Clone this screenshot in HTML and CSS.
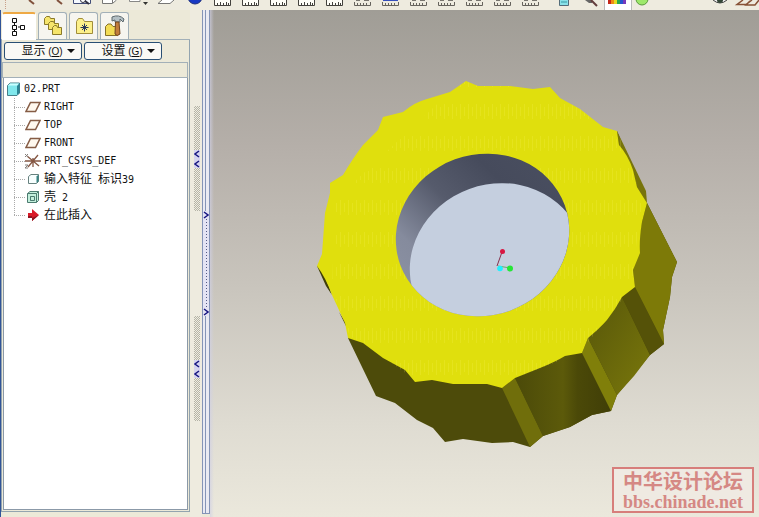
FILE: index.html
```
<!DOCTYPE html>
<html lang="zh-CN">
<head>
<meta charset="utf-8">
<title>02.PRT</title>
<link rel="stylesheet" href="styles.css">
</head>
<body>
<svg class="defs" aria-hidden="true">
  <defs>
    <symbol id="ruler" viewBox="0 0 28 10"><path d="M6.500 0V5.500H22.500V0" fill="#fffef8" stroke="#44423e"/><path d="M9.500 5V3M12.500 5V2M15.500 5V3M18.500 5V2M20.500 5V3" stroke="#44423e"/></symbol>
    <symbol id="ruler-faint" viewBox="0 0 28 10"><path d="M6.500 2V5.500H22.500V2M9.500 5V3M12.500 5V3M15.500 5V3M18.500 5V3" fill="none" stroke="#66635d"/><path d="M8 .5H12M16 .5H21" stroke="#77746e"/></symbol>
    <symbol id="plane" viewBox="0 0 16 16"><path d="M5.500 3.500H15L10.500 12.500H1Z" fill="#fff8ee" stroke="#855c45" stroke-width="1.500"/></symbol>
  </defs>
</svg>

<header class="toolbar">
  <button class="tool" aria-label="Brush"><svg viewBox="0 0 28 10"><path d="M17 0L22 4" stroke="#80503c" stroke-width="2"/><path d="M-6.500 0V9" stroke="#c9a08a" stroke-dasharray="1 1"/></svg></button>
  <button class="tool" aria-label="Pen"><svg viewBox="0 0 28 10"><path d="M17 0L22 4" stroke="#80503c" stroke-width="2"/></svg></button>
  <button class="tool" aria-label="Find"><svg viewBox="0 0 28 10"><path d="M5.500 0V3.500H22.500V0" fill="#f4f8ff" stroke="#424d79"/><circle cx="15" cy="0" r="2.500" fill="#fff" stroke="#334"/><path d="M17 1L21 4" stroke="#334" stroke-width="2"/></svg></button>
  <button class="tool" aria-label="Model"><svg viewBox="0 0 28 10"><path d="M6.500 0V3.500H16.500L20.500 0M16.500 3V0" fill="#fff" stroke="#777"/></svg></button>
  <button class="tool" aria-label="Sheets"><svg viewBox="0 0 28 10"><path d="M5.500 0V1.500H16V0" fill="#fff" stroke="#888"/><path d="M19 2H24L21.500 5Z" fill="#333"/></svg></button>
  <button class="tool" aria-label="Plane"><svg viewBox="0 0 28 10"><path d="M10 0L6 3.500H18L22 0" fill="#fff" stroke="#777"/></svg></button>
  <button class="tool" aria-label="Shade"><svg viewBox="0 0 28 10"><circle cx="15" cy="-3" r="7" fill="#1738c4" stroke="#20307c"/></svg></button>
  <button class="tool" aria-label="View 1"><svg><use href="#ruler"/></svg></button>
  <button class="tool" aria-label="View 2"><svg><use href="#ruler"/></svg></button>
  <button class="tool" aria-label="View 3"><svg><use href="#ruler"/></svg></button>
  <button class="tool" aria-label="View 4"><svg><use href="#ruler"/></svg></button>
  <button class="tool" aria-label="View 5"><svg><use href="#ruler"/></svg></button>
  <button class="tool" aria-label="View 6"><svg><use href="#ruler-faint"/></svg></button>
  <button class="tool" aria-label="View 7"><svg viewBox="0 0 28 10"><use href="#ruler-faint" width="28" height="10"/><path d="M7 .5H22" stroke="#354fbb"/></svg></button>
  <button class="tool" aria-label="View 8"><svg><use href="#ruler-faint"/></svg></button>
  <button class="tool" aria-label="View 9"><svg><use href="#ruler-faint"/></svg></button>
  <button class="tool" aria-label="View 10"><svg><use href="#ruler-faint"/></svg></button>
  <button class="tool" aria-label="View 11"><svg><use href="#ruler-faint"/></svg></button>
  <button class="tool" aria-label="View 12"><svg><use href="#ruler-faint"/></svg></button>
  <button class="tool spaced" aria-label="Delete"><svg viewBox="0 0 28 10"><path d="M9.500 0V5.500H18.500V0" fill="#88e1e8" stroke="#536c79"/><path d="M11 2H17" stroke="#379aa6"/></svg></button>
  <button class="tool" aria-label="Inspect"><svg viewBox="0 0 28 10"><path d="M7 0L11 3H14V0Z" fill="#666"/><path d="M13 0L19 6" stroke="#633d3d" stroke-width="2"/></svg></button>
  <button class="tool pressed" aria-label="Colors"><svg viewBox="0 0 28 10"><path d="M3 0h3v4h-3z" fill="#c5281a"/><path d="M6 0h3v4h-3z" fill="#f08b12"/><path d="M9 0h3v4h-3z" fill="#e5db20"/><path d="M12 0h3v4h-3z" fill="#29a74b"/><path d="M15 0h3v4h-3z" fill="#2657cf"/><path d="M18 0h3v4h-3z" fill="#7539bd"/></svg></button>
  <button class="tool" aria-label="Regenerate"><svg viewBox="0 0 28 10"><circle cx="12" cy="-1" r="6" fill="#9de86a" stroke="#5a993e"/></svg></button>
  <button class="tool last" aria-label="Visibility"><svg viewBox="0 0 28 10"><path d="M10 0Q17 6 24 0" fill="#eee" stroke="#444"/><circle cx="17" cy="0" r="3" fill="#354637"/></svg></button>
  <button class="tool" aria-label="Datum planes"><svg viewBox="0 0 28 10"><path d="M12 0L6 4.500H15L21 0M19 1L15 5H24L28 0" fill="none" stroke="#875136" stroke-width="1.500"/></svg></button>
</header>

<main class="workspace">
  <aside class="navigator">
    <nav class="tabs">
      <button class="tab active" aria-label="Model tree"><svg width="16" height="20" viewBox="0 0 16 20"><path d="M3.500 6V8M3.500 12V14M7 10H9" stroke="#111"/><path d="M1.500 1.500h4v4h-4zM1.500 8.500h4v4h-4zM9.500 8.500h4v4h-4zM1.500 14.500h4v4h-4z" fill="#fff" stroke="#111"/></svg></button>
      <button class="tab" aria-label="Folders"><svg width="20" height="20" viewBox="0 0 20 20"><g fill="#f6e56c" stroke="#8b7a29"><path d="M1.500 8.500V2.500L3.500 .5H6.500L7.500 2.500H11.500V8.500Z"/><path d="M5.500 13.500V7.500L7.500 5.500H10.500L11.500 7.500H15.500V13.500Z"/><path d="M9.500 18.500V11.500L11.500 9.500H13.500L14.500 11.500H18.500V18.500Z"/></g></svg></button>
      <button class="tab" aria-label="Favorites"><svg width="20" height="20" viewBox="0 0 20 20"><path d="M2.500 17.500V5.500L4.500 2.500H8.500L10.500 5.500H18.500V17.500Z" fill="#fcf08a" stroke="#a18d3a"/><path d="M10.500 7.500V15.500M6.500 11.500H14.500M8 9L13 14M13 9L8 14" stroke="#26365c"/></svg></button>
      <button class="tab" aria-label="Tools"><svg width="22" height="22" viewBox="0 0 22 22"><path d="M1.500 20.500V11.500L4 9H7L9 11.500H13.500V20.500Z" fill="#f2dc55" stroke="#857129"/><path d="M8 2Q15 -1 20 4L19 7L16 4V7H11V5L8 6Z" fill="#b4c0c5" stroke="#5c686d"/><path d="M11.500 7H15L16 19Q13 22 11 19Z" fill="#c17c3a" stroke="#71451f"/></svg></button>
    </nav>
    <section class="panel">
      <div class="menus">
        <button class="menu"><span>显示<span class="key"> (<u>O</u>)</span></span><i class="arrow"></i></button>
        <button class="menu"><span>设置<span class="key"> (<u>G</u>)</span></span><i class="arrow"></i></button>
      </div>
      <div class="tree-head"></div>
      <div class="tree">
        <div class="root"><svg class="icon" viewBox="0 0 16 16"><path d="M1.500 4.500L4 2H13.500V12L11 14.500H1.500Z" fill="#80e7ec" stroke="#477f89"/><path d="M11 14V5L13.500 2V12Z" fill="#2b8494"/><path d="M2 4.500H11L13 2.500H4Z" fill="#c9ffff"/></svg><span class="latin">02.PRT</span></div>
        <ul class="nodes">
          <li><svg class="icon"><use href="#plane"/></svg><span class="latin">RIGHT</span></li>
          <li><svg class="icon"><use href="#plane"/></svg><span class="latin">TOP</span></li>
          <li><svg class="icon"><use href="#plane"/></svg><span class="latin">FRONT</span></li>
          <li><svg class="icon" viewBox="0 0 16 16"><path d="M2 3L14 13M13 2L3 14M0 8H16M8 5V14" stroke="#855743" stroke-width="1.300"/><path d="M0 1L3 4M3 1L0 4M0 12H3L0 15H3" stroke="#85807c" fill="none"/></svg><span class="latin">PRT_CSYS_DEF</span></li>
          <li><svg class="icon" viewBox="0 0 16 16"><path d="M3.500 5.500L6 3.500H13.500V10.500L11.500 12.500H3.500Z" fill="#f8ffff" stroke="#66817e"/><path d="M11.500 12V5.500L13.500 3.500V10.500Z" fill="#398383"/></svg><span>输入特征<span class="latin"> </span>标识<span class="latin">39</span></span></li>
          <li><svg class="icon" viewBox="0 0 16 16"><path d="M2.500 4.500L5 2.500H13.500V11.500L11.500 13.500H2.500Z" fill="#c3efdc" stroke="#4c7b70"/><path d="M2.500 4.500H11.500V13.500M11.500 4.500L13.500 2.500M5.500 7.500H9.500V11.500H5.500ZM5.500 7.500V11.500" fill="none" stroke="#4c7b70"/></svg><span>壳<span class="latin"> 2</span></span></li>
          <li><svg class="icon" viewBox="0 0 16 16"><path d="M3 6H7V2L14 8L7 14V10H3Z" fill="#d91a28"/><path d="M3 9H7V14L14 8L7 11H3Z" fill="#8e1420"/></svg><span>在此插入</span></li>
        </ul>
      </div>
    </section>
  </aside>

  <div class="grips">
    <button class="grip" aria-label="Collapse"><svg width="6" height="18" viewBox="0 0 6 18"><path d="M0 0H6V18H0Z" fill="#d5d2ee"/><path d="M5 1L1 4L5 7M5 11L1 14L5 17" fill="none" stroke="#171681" stroke-width="1.500"/></svg></button>
    <button class="grip" aria-label="Collapse tree"><svg width="6" height="18" viewBox="0 0 6 18"><path d="M0 0H6V18H0Z" fill="#d5d2ee"/><path d="M5 1L1 4L5 7M5 11L1 14L5 17" fill="none" stroke="#171681" stroke-width="1.500"/></svg></button>
  </div>
  <div class="rail">
    <button class="expand" aria-label="Expand"><svg width="6" height="8" viewBox="0 0 6 8"><path d="M1 1L5 4L1 7" fill="none" stroke="#171681" stroke-width="1.500"/></svg><i class="dots"></i><svg width="6" height="8" viewBox="0 0 6 8"><path d="M1 1L5 4L1 7" fill="none" stroke="#171681" stroke-width="1.500"/></svg></button>
  </div>

  <section class="view">
    <svg class="model" viewBox="210 10 549 507" preserveAspectRatio="xMidYMid meet" role="img" aria-label="02.PRT">
      <defs>
        <linearGradient id="wall" x1="0" x2="1" y1="1" y2="0"><stop offset="0" stop-color="#9197a8"/><stop offset=".28" stop-color="#858b9d"/><stop offset=".5" stop-color="#565b6c"/><stop offset=".7" stop-color="#464b5c"/><stop offset="1" stop-color="#4b5062"/></linearGradient>
        <linearGradient id="rim" x1="0" x2="1" y1="0" y2="1"><stop offset="0" stop-color="#57560a"/><stop offset="1" stop-color="#7a780b"/></linearGradient>
        <linearGradient id="notch" x1="0" x2="1"><stop offset="0" stop-color="#4b4a09"/><stop offset=".5" stop-color="#5c5a0a"/><stop offset=".65" stop-color="#4b4908"/><stop offset="1" stop-color="#403e07"/></linearGradient>
        <clipPath id="hole"><ellipse cx="482.500" cy="235" rx="87.500" ry="80.500" transform="rotate(-20 482.500 235)"/></clipPath>
        <pattern id="grain" x="514" y="104" width="8" height="32" patternUnits="userSpaceOnUse"><path d="M2.500 0V15M6.500 3V12" stroke="#fffa70" stroke-opacity=".16"/></pattern>
      </defs>
      <path d="M348 338L376 396L395 403L417 420L433 428L445 442L463 439L492 443L513 442L530 447L543 436L570 427L592 415L611 411L617 395L650 355L664 344L663 330L670 297L672 277L677 262L647 203L617 131L500 250Z" fill="#4d4b0a"/>
      <path d="M502 388L515 378L543 436L530 447Z" fill="#706e0b"/>
      <path d="M515 378L540 368L565 356L582 353L611 411L592 415L570 427L543 436Z" fill="url(#notch)"/>
      <path d="M582 353L588 338L617 395L611 411Z" fill="#807f0a"/>
      <path d="M588 338L607 320L622 297L650 355L634 376L617 395Z" fill="url(#rim)"/>
      <path d="M622 297L635 287L664 344L650 355Z" fill="#555208"/>
      <path d="M635 287L633 270L642 222L647 203L677 262L672 277L670 297L663 330L664 344Z" fill="#7d7a08"/>
      <path d="M617 131L646 191L647 203L637 187L619 145Z" fill="#77740b"/>
      <path d="M317 266Q322 266 332 295L326 286ZM339 312L346 323L347 328Z" fill="#3f3e08"/>
      <path d="M317 266L322 254L325 213L330 193V183L343 175Q353 158 363 145L378 130L383 117L403 112Q415 102 427 99L450 92L466 81L478 86H510L533 89L550 87L560 98L580 109L603 127L617 131L619 145Q628 155 633 170L637 187L647 203L642 222Q639 240 640 253L633 270L635 287L622 297Q615 310 607 320Q600 328 588 338L582 353L565 356Q555 362 540 368L515 378L502 388L487 384H453L432 380L415 382L405 370L383 358L363 343L348 338L345 323L332 295Q326 278 317 266Z" fill="#e0df0d"/>
      <path d="M450 92L466 81L478 86H510L533 89L550 87L560 98L580 109L603 127L617 131L633 170L642 203L633 270L633 287L605 320L580 353L515 378L502 388L453 383L415 380L385 358L350 336L332 290L335 200Z" fill="url(#grain)"/>
      <g clip-path="url(#hole)"><path d="M390 145H575V325H390Z" fill="url(#wall)"/><ellipse cx="497" cy="265" rx="88" ry="81" transform="rotate(-20 497 265)" fill="#c5cfdf"/></g>
      <path d="M497 266L502 252" stroke="#85304c"/>
      <path d="M498 266L510 268" stroke="#66ad6d"/>
      <circle cx="502.500" cy="251.500" r="2.500" fill="#d91742"/>
      <circle cx="500" cy="268.500" r="2.800" fill="#23efff"/>
      <circle cx="510" cy="268.500" r="3" fill="#26e637"/>
    </svg>
    <div class="watermark"><span class="forum">中华设计论坛</span><span class="site">bbs.chinade.net</span></div>
  </section>
</main>
</body>
</html>
```
FILE: styles.css
```
* { box-sizing: border-box; }
body {
  margin: 0;
  height: 100vh;
  display: flex;
  flex-direction: column;
  overflow: hidden;
  background: #ece9d8;
  color: #111;
  font: 12px/18px "Liberation Sans", "Noto Sans CJK SC", sans-serif;
}
button { padding: 0; border: 0; background: none; color: inherit; font: inherit; }
svg { display: block; }
.defs { position: absolute; width: 0; height: 0; }

.toolbar { display: flex; flex: none; height: 10px; padding-left: 12px; overflow: hidden; background: #eeebdf; }
.tool { flex: none; width: 28px; height: 10px; }
.tool svg { width: 28px; height: 10px; overflow: visible; }
.spaced { margin-left: 6px; }
.pressed { margin: 0 -2px; background: #fff; border: 1px solid #bbb; border-width: 0 1px; }
.last { margin-left: auto; }

.workspace { flex: 1; display: flex; min-height: 0; }
.navigator { flex: none; width: 190px; display: flex; flex-direction: column; padding-bottom: 5px; border-left: 1px solid #315498; background: #ece9d8; }
.tabs { display: flex; gap: 2px; height: 30px; padding: 2px 0 0 1px; border-bottom: 1px solid #a2b0b8; }
.tab { display: flex; align-items: center; justify-content: center; width: 29px; border: 1px solid #a2b0b8; border-bottom: 0; border-radius: 3px 3px 0 0; background: #f6f5ef; }
.active { width: 34px; margin-bottom: -1px; border-color: #fff; border-top: 2px solid #eea944; background: #fff; }

.panel { flex: 1; display: flex; flex-direction: column; min-height: 0; border: 1px solid #93a4af; border-top: 0; }
.menus { display: flex; gap: 2px; padding: 2px; }
.menu { display: flex; align-items: center; justify-content: center; gap: 4px; width: 78px; height: 18px; padding-left: 10px; border: 1px solid #294f74; border-radius: 3px; background: #faf9f5; white-space: nowrap; line-height: 16px; }
.key { font: 10px/16px "Liberation Sans", sans-serif; }
.arrow { border: 4px solid transparent; border-top: 4px solid #111; border-bottom: 0; }
.tree-head { height: 16px; margin-right: 1px; border: 1px solid #a3b0b8; }
.tree { flex: 1; margin: 0 1px 1px; padding: 2px 0 0 2px; border: 1px solid #8b99a8; border-top: 0; background: #fff; }
.root, .nodes li { display: flex; align-items: center; height: 18px; gap: 3px; white-space: pre; }
.root { gap: 2px; }
.nodes { margin: 0 0 0 8px; padding: 0; list-style: none; }
.nodes li { padding-left: 11px; background: repeating-linear-gradient(180deg, #aaa 0 1px, transparent 1px 2px) 0 0 / 1px 100% no-repeat, repeating-linear-gradient(90deg, #aaa 0 1px, transparent 1px 2px) 0 9px / 12px 1px no-repeat; }
.nodes li:last-child { background-size: 1px 10px, 12px 1px; }
.icon { flex: none; width: 16px; height: 16px; }
.latin { font: 10px/18px "DejaVu Sans Mono", monospace; }

.grips { flex: none; display: flex; flex-direction: column; align-items: center; gap: 105px; width: 12px; padding: 96px 0 0 2px; background: #eeebdf; }
.grip { display: flex; align-items: center; justify-content: center; width: 6px; height: 105px; background: repeating-conic-gradient(#b4b2a7 0 25%, #efeddf 0 50%) 0 0 / 2px 2px; }
.rail { flex: none; display: flex; justify-content: center; width: 8px; margin-bottom: 3px; padding-top: 201px; border: 1px solid #8494b7; border-top: 0; background: linear-gradient(#8494b7, #8494b7) 2px 0 / 1px 100% no-repeat, #e9eaf2; }
.expand { display: flex; flex-direction: column; align-items: center; justify-content: space-between; height: 105px; width: 6px; background: #e4e4f4; }
.dots { flex: 1; width: 1px; background: repeating-linear-gradient(#555b85 0 1px, transparent 1px 3px); }

.view { flex: 1; position: relative; min-width: 0; background: linear-gradient(90deg, #d0d0e4aa, #d0d0e400 4px), linear-gradient(#a09d96, #b5afa9 27%, #c9c5bd 55%, #dfdcd2 82%, #ebe8dc); }
.model { width: 100%; height: 100%; }
.watermark { position: absolute; right: 5px; bottom: 4px; display: flex; flex-direction: column; align-items: center; justify-content: center; width: 142px; height: 46px; border: 2px solid #d77e7b; background: #efeae2; color: #d58884; }
.forum { font: bold 20px/24px "Noto Sans CJK SC", sans-serif; }
.site { font: bold 18px/18px "Liberation Serif", serif; }
```
